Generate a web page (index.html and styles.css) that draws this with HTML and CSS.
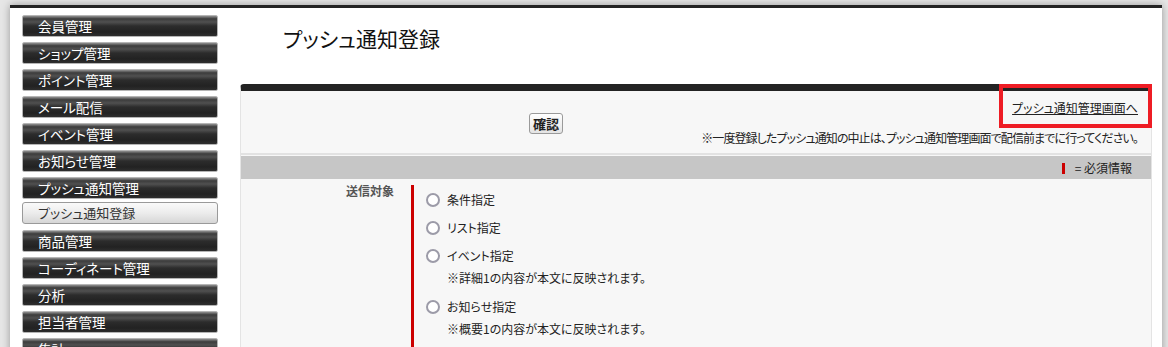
FILE: index.html
```html
<!DOCTYPE html>
<html lang="ja">
<head>
<meta charset="utf-8">
<title>プッシュ通知登録</title>
<link rel="stylesheet" href="styles.css">
</head>
<body>
<div class="wrap">
  <nav class="side">
    <a class="menu">会員管理</a>
    <a class="menu">ショップ管理</a>
    <a class="menu">ポイント管理</a>
    <a class="menu">メール配信</a>
    <a class="menu">イベント管理</a>
    <a class="menu">お知らせ管理</a>
    <a class="menu">プッシュ通知管理</a>
    <a class="sub">プッシュ通知登録</a>
    <a class="menu">商品管理</a>
    <a class="menu">コーディネート管理</a>
    <a class="menu">分析</a>
    <a class="menu">担当者管理</a>
    <a class="menu">集計</a>
  </nav>
  <main class="main">
    <h1 class="title">プッシュ通知登録</h1>
    <section class="panel">
      <div class="actions">
        <div class="act-btn"><button class="btn">確認</button></div>
        <div class="act-link"><a class="link">プッシュ通知管理画面へ</a></div>
        <div class="act-note">※一度登録したプッシュ通知の中止は、プッシュ通知管理画面で配信前までに行ってください。</div>
      </div>
      <div class="req-bar"><span class="req-mark"></span> = 必須情報</div>
      <div class="form-row">
        <div class="form-label">送信対象</div>
        <div class="form-value">
          <div class="opt"><span class="radio"></span><span class="opt-text">条件指定</span></div>
          <div class="opt"><span class="radio"></span><span class="opt-text">リスト指定</span></div>
          <div class="opt"><span class="radio"></span><span class="opt-text">イベント指定<span class="note">※詳細1の内容が本文に反映されます。</span></span></div>
          <div class="opt"><span class="radio"></span><span class="opt-text">お知らせ指定<span class="note">※概要1の内容が本文に反映されます。</span></span></div>
        </div>
      </div>
      <div class="highlight"></div>
    </section>
  </main>
</div>
</body>
</html>
```
FILE: styles.css
```css
html, body {
  margin: 0;
  padding: 0;
  height: 100%;
  overflow: hidden;
}
body {
  background: #e6e6e6;
  font-family: "Noto Sans CJK JP", "Liberation Sans", sans-serif;
  font-size: 12px;
  color: #222;
  font-feature-settings: "palt";
}
.wrap {
  display: flex;
  margin: 5px 6px 0 10px;
  min-height: 400px;
  background: #fff;
  border-top: 3px solid #222;
  box-shadow: 0 0 8px rgba(0, 0, 0, 0.35);
}
.side {
  width: 218px;
  padding: 7px 0 0 12px;
  display: flex;
  flex-direction: column;
  flex: none;
}
.menu {
  box-sizing: border-box;
  width: 196px;
  height: 22px;
  margin-bottom: 5px;
  padding-left: 15px;
  font-size: 13.5px;
  line-height: 21px;
  color: #fff;
  border: 1px solid #b5b5b5;
  border-radius: 2px;
  background: linear-gradient(to bottom, #909090 0%, #3c3c3c 14%, #505050 30%, #2c2c2c 50%, #222 80%, #2e2e2e 100%);
}
.sub {
  box-sizing: border-box;
  width: 196px;
  height: 22px;
  margin: -2px 0 6px;
  padding-left: 15px;
  font-size: 13px;
  line-height: 20px;
  color: #333;
  border: 1px solid #9a9a9a;
  border-radius: 3px;
  background: linear-gradient(to bottom, #fafafa 0%, #ececec 50%, #d6d6d6 100%);
}
.main {
  flex: 1;
  padding-right: 10px;
}
.title {
  margin: 16px 0 0 43px;
  height: 28px;
  font-size: 21px;
  line-height: 28px;
  font-weight: normal;
  color: #111;
}
.panel {
  position: relative;
  margin-top: 32px;
  background: #f7f7f7;
  border-top: 7px solid #232323;
  border-left: 1px solid #e4e4e4;
  border-right: 1px solid #e4e4e4;
  border-radius: 4px 0 0 0;
  min-height: 300px;
}
.actions {
  display: grid;
  grid-template-columns: 610px 1fr;
  grid-template-rows: 20px 20px;
  row-gap: 10px;
  height: 64px;
  box-sizing: border-box;
  padding: 7px 13px 7px 0;
  border-bottom: 2px solid #e2e2e2;
  margin-bottom: 1px;
}
.act-btn {
  grid-column: 1;
  grid-row: 1 / 3;
  display: flex;
  align-items: center;
  justify-content: center;
}
.btn {
  height: 21px;
  padding: 0 3px;
  font-family: inherit;
  font-size: 13px;
  font-weight: bold;
  color: #222;
  line-height: 17px;
  border: 1px solid #9a9a9a;
  border-radius: 3px;
  background: linear-gradient(to bottom, #ffffff, #e4e4e4);
}
.act-link {
  grid-column: 2;
  grid-row: 1;
  text-align: right;
  line-height: 20px;
}
.link {
  color: #222;
  text-decoration: underline;
}
.act-note {
  grid-column: 1 / 3;
  grid-row: 2;
  justify-self: end;
  line-height: 20px;
  letter-spacing: -0.9px;
}
.req-bar {
  height: 23px;
  line-height: 23px;
  background: #c6c6c6;
  text-align: right;
  padding-right: 19px;
}
.req-mark {
  display: inline-block;
  width: 3px;
  height: 11px;
  background: #c00;
  vertical-align: -1px;
  margin-right: 7px;
}
.form-row {
  display: flex;
  padding-top: 4px;
}
.form-label {
  box-sizing: border-box;
  width: 170px;
  padding-right: 17px;
  text-align: right;
  font-weight: bold;
  color: #555;
  line-height: 16px;
}
.form-value {
  flex: 1;
  margin-top: 2px;
  border-left: 3px solid #c00;
  padding: 5px 0 20px 12px;
  display: flex;
  flex-direction: column;
  gap: 8px;
}
.opt {
  display: flex;
  gap: 7px;
  line-height: 20px;
}
.radio {
  box-sizing: border-box;
  flex: none;
  width: 14px;
  height: 14px;
  margin-top: 3px;
  border: 2px solid #9c9ba8;
  border-radius: 50%;
  background: #fff;
}
.opt-text {
  display: flex;
  flex-direction: column;
}
.note {
  line-height: 22px;
  margin-top: 1px;
}
.highlight {
  position: absolute;
  top: -7px;
  right: -1px;
  width: 153px;
  height: 44px;
  box-sizing: border-box;
  border: 4px solid #ee1c24;
}
```
